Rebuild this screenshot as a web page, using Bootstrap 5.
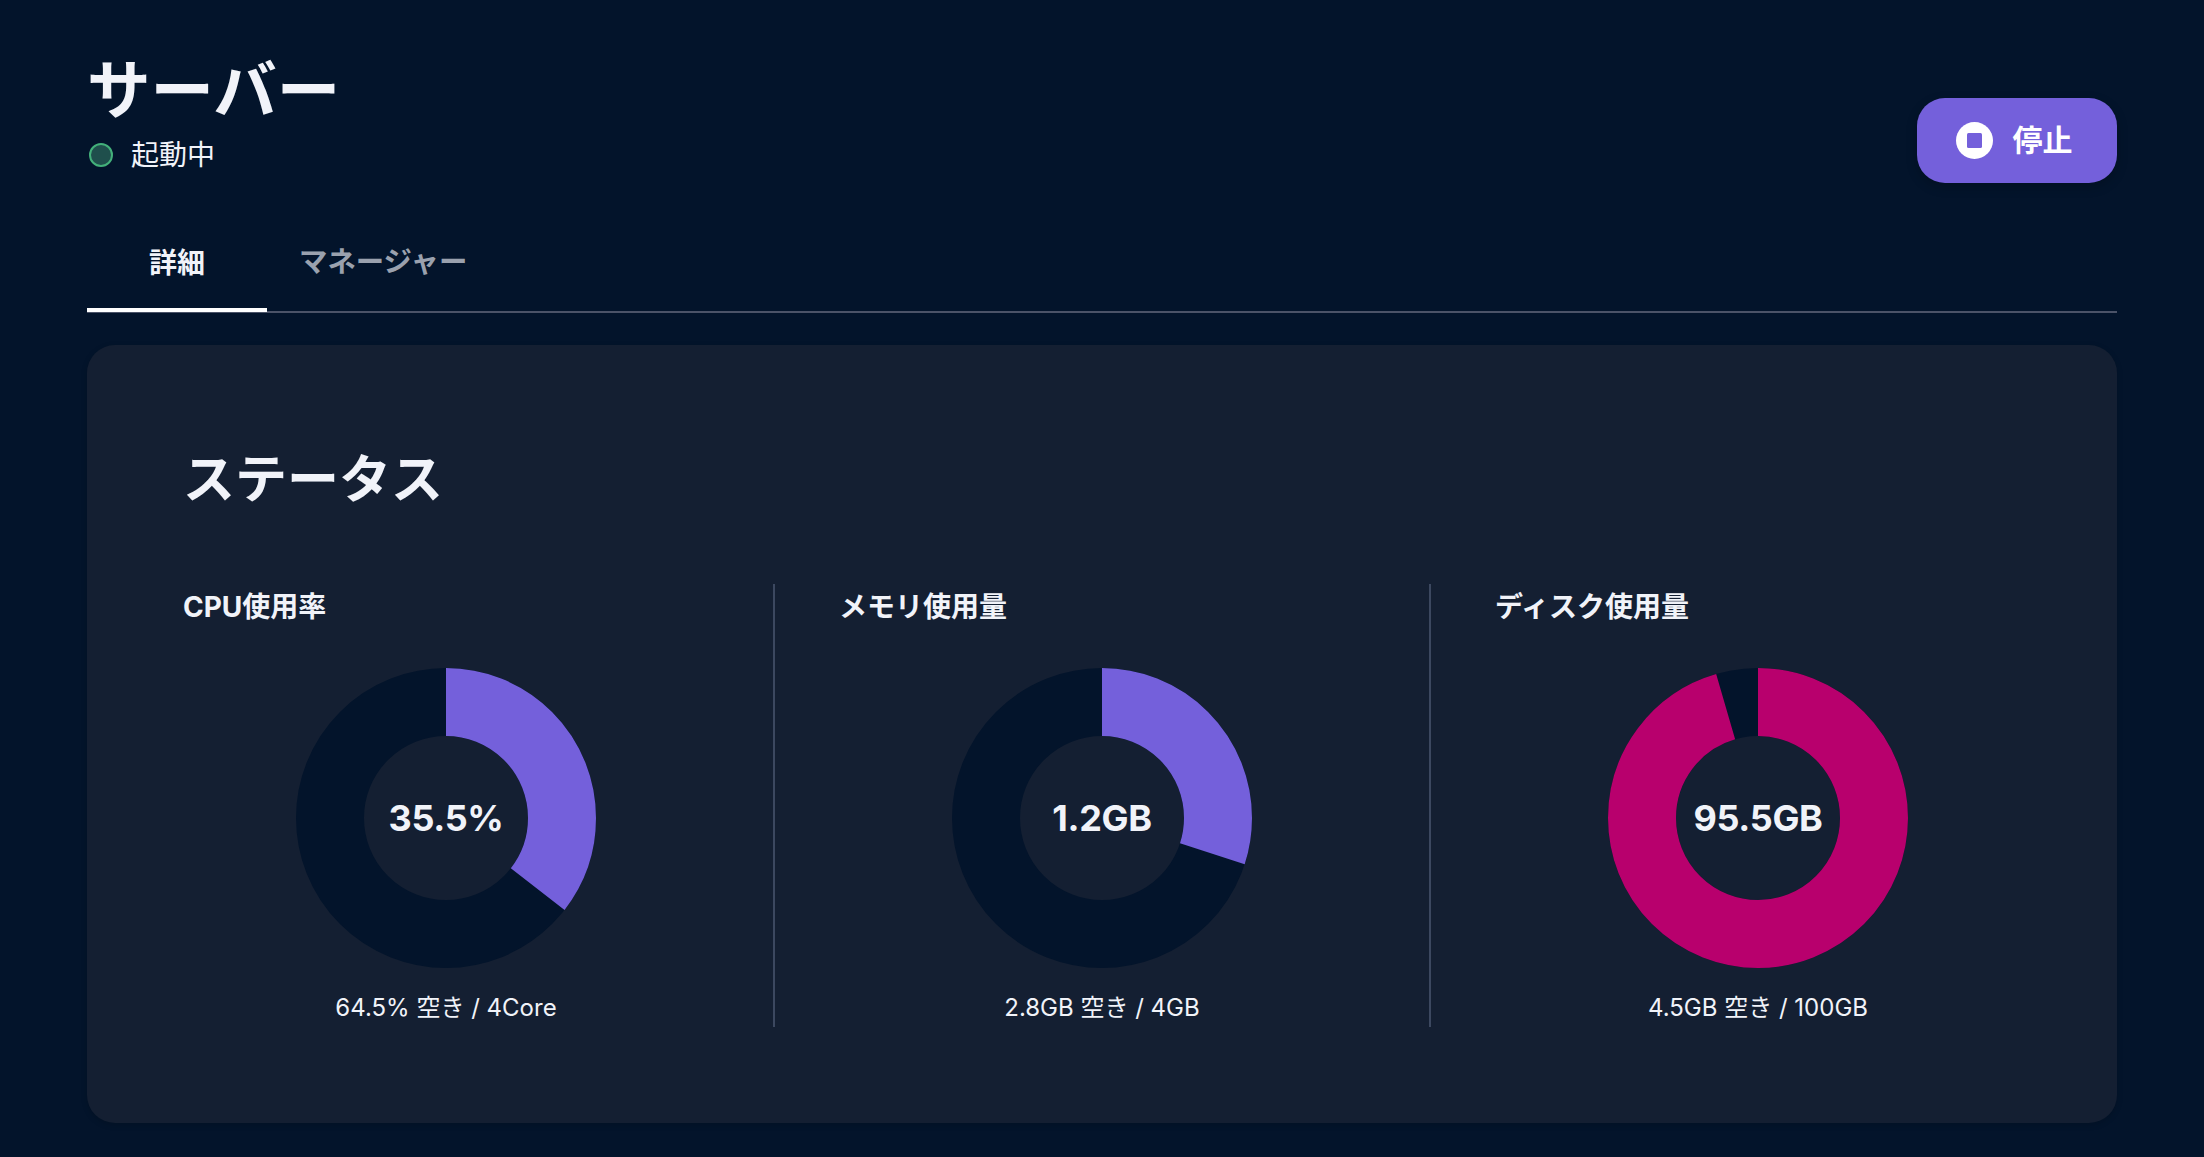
<!DOCTYPE html>
<html lang="ja">
<head>
<meta charset="utf-8">
<title>サーバー</title>
<link href="https://cdn.jsdelivr.net/npm/bootstrap@5.3.0/dist/css/bootstrap.min.css" rel="stylesheet">
<style>
html,body{height:100%}
body{background:#03142b;color:#f1f3f9;font-family:Inter,"Noto Sans CJK JP",sans-serif;overflow:hidden}
.page-wrap{padding:48px 87px 0}
.page-head{height:174px}
.page-title{font-size:63.5px;font-weight:700;line-height:84px;margin:0}
.status-line{font-size:28px;line-height:40px;margin-top:3px;font-weight:400}
.status-dot{width:24px;height:24px;border-radius:50%;background:#1f4f4c;border:2px solid #43b07a;margin:0 18px 0 2px}
.stop-btn{width:200px;height:85px;border-radius:28px;background:#7460db;color:#fff;border:0;font-size:30px;font-weight:700;box-shadow:0 4px 12px rgba(0,0,0,.2);margin-top:50px;gap:20px;padding:0 6px 0 0}
.stop-btn:hover,.stop-btn:active{background:#7460db;color:#fff}
.tab-bar{border-bottom:2px solid #4b5368;height:91px}
.tab-bar .nav-link{height:90px;font-size:28.4px;font-weight:700;color:#9aa1ae;background:none;border:0;padding:0 0 5px;border-bottom:4px solid transparent;display:flex;align-items:center;justify-content:center}
.tab-bar .nav-link.active{color:#f1f3f9;font-size:28px;border-bottom-color:#fff;width:180px}
.tab-bar .tab-two{margin-left:32px}
.panel{background:#141f32;border-radius:28px;margin-top:32px;height:778px;padding:99px 65px 0 96px;box-shadow:0 2px 6px rgba(0,0,0,.15)}
.panel-title{font-size:52px;font-weight:700;line-height:72px;margin:0 0 68px}
.metric{flex:0 0 656px;height:443px;padding:0 64px;border-right:2px solid #3c4860}
.metric:first-child{flex:0 0 592px;padding-left:0}
.metric:last-child{border-right:0;padding-right:0;flex:0 0 590px}
.metric-name{font-size:28px;font-weight:700;line-height:46px;margin:0 0 38px}
.ring-box{width:300px;height:300px}
.ring-box svg{display:block;transform:rotate(-90deg)}
.ring-value{font-size:36px;font-weight:700;line-height:1;letter-spacing:-.01em}
.metric-note{font-size:24px;line-height:36px;margin-top:22px}
</style>
</head>
<body>
<div class="page-wrap">
  <div class="page-head d-flex justify-content-between align-items-start">
    <div>
      <h1 class="page-title">サーバー</h1>
      <div class="status-line d-flex align-items-center"><span class="status-dot d-inline-block"></span>起動中</div>
    </div>
    <button class="btn stop-btn d-inline-flex align-items-center justify-content-center" type="button">
      <svg width="37" height="37" viewBox="0 0 37 37"><circle cx="18.5" cy="18.5" r="18.5" fill="#fff"/><rect x="11" y="11" width="15" height="15" rx="1.5" fill="#7460db"/></svg>
      停止
    </button>
  </div>
  <ul class="nav tab-bar">
    <li class="nav-item"><a class="nav-link active" href="#">詳細</a></li>
    <li class="nav-item tab-two"><a class="nav-link" href="#">マネージャー</a></li>
  </ul>
  <div class="panel">
    <h2 class="panel-title">ステータス</h2>
    <div class="d-flex">
      <div class="metric">
        <h3 class="metric-name">CPU使用率</h3>
        <div class="ring-box position-relative mx-auto">
          <svg width="300" height="300" viewBox="0 0 300 300"><circle cx="150" cy="150" r="116" fill="none" stroke="#03142b" stroke-width="68"/><circle cx="150" cy="150" r="116" fill="none" stroke="#7460db" stroke-width="68" pathLength="100" stroke-dasharray="35.5 64.5"/></svg>
          <div class="ring-value position-absolute top-50 start-50 translate-middle">35.5%</div>
        </div>
        <div class="metric-note text-center">64.5% 空き / 4Core</div>
      </div>
      <div class="metric">
        <h3 class="metric-name">メモリ使用量</h3>
        <div class="ring-box position-relative mx-auto">
          <svg width="300" height="300" viewBox="0 0 300 300"><circle cx="150" cy="150" r="116" fill="none" stroke="#03142b" stroke-width="68"/><circle cx="150" cy="150" r="116" fill="none" stroke="#7460db" stroke-width="68" pathLength="100" stroke-dasharray="30 70"/></svg>
          <div class="ring-value position-absolute top-50 start-50 translate-middle">1.2GB</div>
        </div>
        <div class="metric-note text-center">2.8GB 空き / 4GB</div>
      </div>
      <div class="metric">
        <h3 class="metric-name">ディスク使用量</h3>
        <div class="ring-box position-relative mx-auto">
          <svg width="300" height="300" viewBox="0 0 300 300"><circle cx="150" cy="150" r="116" fill="none" stroke="#03142b" stroke-width="68"/><circle cx="150" cy="150" r="116" fill="none" stroke="#b8006d" stroke-width="68" pathLength="100" stroke-dasharray="95.5 4.5"/></svg>
          <div class="ring-value position-absolute top-50 start-50 translate-middle">95.5GB</div>
        </div>
        <div class="metric-note text-center">4.5GB 空き / 100GB</div>
      </div>
    </div>
  </div>
</div>
<script src="https://cdn.jsdelivr.net/npm/bootstrap@5.3.0/dist/js/bootstrap.bundle.min.js"></script>
</body>
</html>
